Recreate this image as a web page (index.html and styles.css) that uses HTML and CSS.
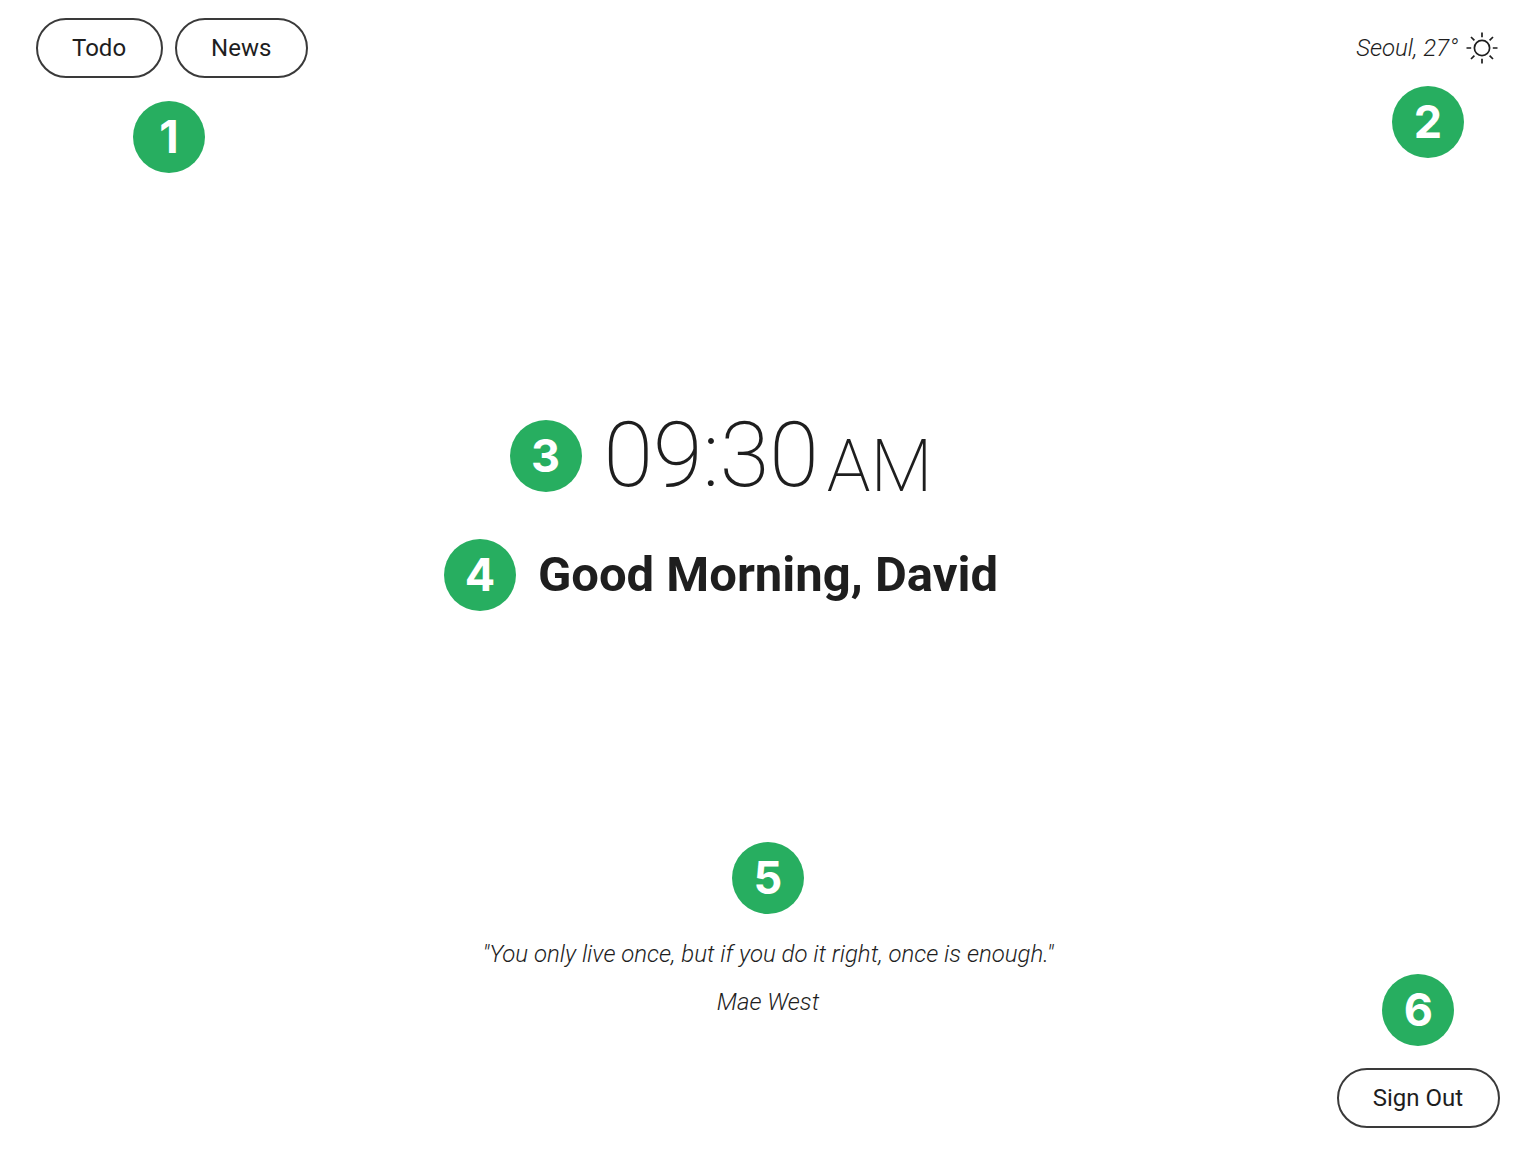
FILE: index.html
```html
<!DOCTYPE html>
<html lang="en">
<head>
<meta charset="utf-8">
<meta name="viewport" content="width=device-width, initial-scale=1">
<title>Good Morning</title>
<link rel="stylesheet" href="styles.css">
</head>
<body>
<header class="topbar">
  <nav class="nav">
    <button class="pill" type="button">Todo</button>
    <button class="pill" type="button">News</button>
    <span class="badge badge-nav">1</span>
  </nav>
  <div class="weather">
    <span>Seoul, 27°</span>
    <svg class="sun" viewBox="0 0 32 32" width="32" height="32" aria-hidden="true">
      <circle cx="16" cy="16" r="7.6"/>
      <path d="M16 .5v4.7M16 26.8v4.7M.5 16h4.7M26.8 16h4.7M5 5l3.4 3.4M23.6 23.6L27 27M5 27l3.4-3.4M23.6 8.4L27 5"/>
    </svg>
    <span class="badge badge-weather">2</span>
  </div>
</header>
<main class="hero">
  <div class="clock">
    <span class="badge badge-side">3</span>
    <time class="time" datetime="09:30">09:30</time>
    <span class="period">AM</span>
  </div>
  <h1 class="greeting"><span class="badge badge-side">4</span>Good Morning, David</h1>
</main>
<footer class="bottom">
  <figure class="quote">
    <span class="badge">5</span>
    <blockquote class="quote-line">"You only live once, but if you do it right, once is enough."</blockquote>
    <figcaption class="quote-line">Mae West</figcaption>
  </figure>
  <div class="account">
    <span class="badge">6</span>
    <button class="pill" type="button">Sign Out</button>
  </div>
</footer>
</body>
</html>
```
FILE: styles.css
```css
* {
  box-sizing: border-box;
}

body {
  margin: 0;
  min-height: 100vh;
  display: flex;
  flex-direction: column;
  background: #fff;
  color: #1e1e1e;
  font-family: Roboto, sans-serif;
  font-size: 24px;
  line-height: 28px;
}

.topbar {
  display: flex;
  justify-content: space-between;
  align-items: center;
  padding: 18px 36px 0;
}

.nav {
  position: relative;
  display: flex;
  gap: 12px;
}

.pill {
  height: 60px;
  padding: 0 35px 0 34px;
  border: 2px solid #3a3a3a;
  border-radius: 30px;
  background: #fff;
  color: inherit;
  font: inherit;
  cursor: pointer;
}

.weather {
  position: relative;
  display: flex;
  align-items: center;
  gap: 8px;
  padding-right: 2px;
  font-style: italic;
  font-weight: 300;
}

.sun {
  fill: none;
  stroke: #1e1e1e;
  stroke-width: 1.7;
}

.badge {
  display: grid;
  place-items: center;
  width: 72px;
  height: 72px;
  border-radius: 50%;
  background: #27ae60;
  color: #fff;
  font: 700 45px/54px Inter, sans-serif;
}

.badge-nav {
  position: absolute;
  top: 83px;
  left: 97px;
}

.badge-weather {
  position: absolute;
  top: 54px;
  right: 36px;
}

.badge-side {
  position: absolute;
  top: 50%;
  right: 100%;
  margin: -36px 22px 0 0;
}

.hero {
  flex: 1;
  display: flex;
  flex-direction: column;
  align-items: center;
  justify-content: center;
  gap: 36px;
  padding-top: 88px;
}

.clock {
  position: relative;
  display: flex;
  align-items: flex-end;
  gap: 8px;
  font-weight: 200;
}

.time {
  font-size: 90px;
  line-height: 106px;
}

.period {
  font-size: 72px;
  line-height: 84px;
}

.greeting {
  position: relative;
  margin: 0;
  font-size: 49px;
  font-weight: 700;
  line-height: 60px;
}

.bottom {
  display: grid;
  grid-template-columns: 1fr auto 1fr;
  align-items: end;
  padding: 0 36px 24px;
}

.quote {
  grid-column: 2;
  display: flex;
  flex-direction: column;
  align-items: center;
  gap: 20px;
  margin: 0 0 112px;
  font-style: italic;
  font-weight: 300;
}

.quote .badge {
  margin-bottom: 6px;
}

.quote-line {
  margin: 0;
}

.account {
  justify-self: end;
  display: flex;
  flex-direction: column;
  align-items: center;
  gap: 22px;
}
```
